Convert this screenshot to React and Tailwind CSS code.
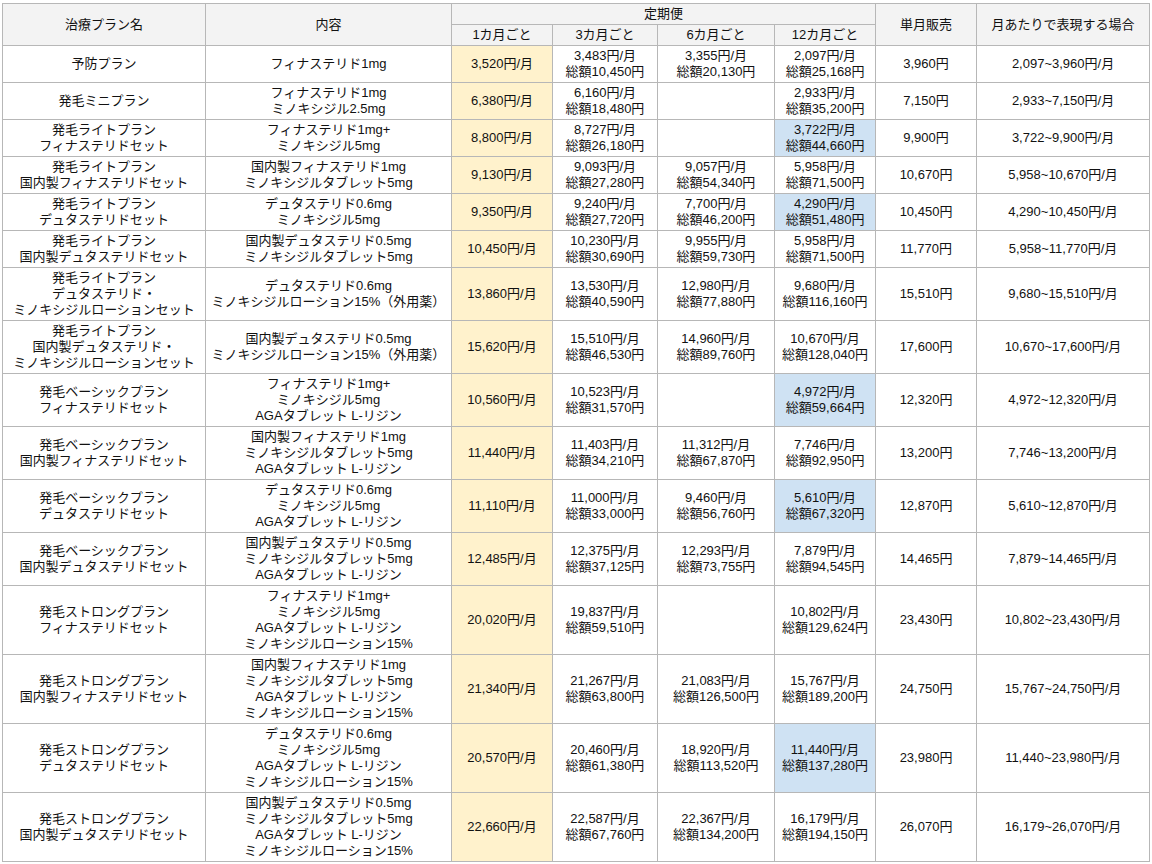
const rows = [
  ['予防プラン', 'フィナステリド1mg', '3,520円/月', ['3,483円/月', '総額10,450円'], ['3,355円/月', '総額20,130円'], ['2,097円/月', '総額25,168円'], false, '3,960円', '2,097~3,960円/月'],
  ['発毛ミニプラン', 'フィナステリド1mg\nミノキシジル2.5mg', '6,380円/月', ['6,160円/月', '総額18,480円'], null, ['2,933円/月', '総額35,200円'], false, '7,150円', '2,933~7,150円/月'],
  ['発毛ライトプラン\nフィナステリドセット', 'フィナステリド1mg+\nミノキシジル5mg', '8,800円/月', ['8,727円/月', '総額26,180円'], null, ['3,722円/月', '総額44,660円'], true, '9,900円', '3,722~9,900円/月'],
  ['発毛ライトプラン\n国内製フィナステリドセット', '国内製フィナステリド1mg\nミノキシジルタブレット5mg', '9,130円/月', ['9,093円/月', '総額27,280円'], ['9,057円/月', '総額54,340円'], ['5,958円/月', '総額71,500円'], false, '10,670円', '5,958~10,670円/月'],
  ['発毛ライトプラン\nデュタステリドセット', 'デュタステリド0.6mg\nミノキシジル5mg', '9,350円/月', ['9,240円/月', '総額27,720円'], ['7,700円/月', '総額46,200円'], ['4,290円/月', '総額51,480円'], true, '10,450円', '4,290~10,450円/月'],
  ['発毛ライトプラン\n国内製デュタステリドセット', '国内製デュタステリド0.5mg\nミノキシジルタブレット5mg', '10,450円/月', ['10,230円/月', '総額30,690円'], ['9,955円/月', '総額59,730円'], ['5,958円/月', '総額71,500円'], false, '11,770円', '5,958~11,770円/月'],
  ['発毛ライトプラン\nデュタステリド・\nミノキシジルローションセット', 'デュタステリド0.6mg\nミノキシジルローション15%（外用薬）', '13,860円/月', ['13,530円/月', '総額40,590円'], ['12,980円/月', '総額77,880円'], ['9,680円/月', '総額116,160円'], false, '15,510円', '9,680~15,510円/月'],
  ['発毛ライトプラン\n国内製デュタステリド・\nミノキシジルローションセット', '国内製デュタステリド0.5mg\nミノキシジルローション15%（外用薬）', '15,620円/月', ['15,510円/月', '総額46,530円'], ['14,960円/月', '総額89,760円'], ['10,670円/月', '総額128,040円'], false, '17,600円', '10,670~17,600円/月'],
  ['発毛ベーシックプラン\nフィナステリドセット', 'フィナステリド1mg+\nミノキシジル5mg\nAGAタブレット L-リジン', '10,560円/月', ['10,523円/月', '総額31,570円'], null, ['4,972円/月', '総額59,664円'], true, '12,320円', '4,972~12,320円/月'],
  ['発毛ベーシックプラン\n国内製フィナステリドセット', '国内製フィナステリド1mg\nミノキシジルタブレット5mg\nAGAタブレット L-リジン', '11,440円/月', ['11,403円/月', '総額34,210円'], ['11,312円/月', '総額67,870円'], ['7,746円/月', '総額92,950円'], false, '13,200円', '7,746~13,200円/月'],
  ['発毛ベーシックプラン\nデュタステリドセット', 'デュタステリド0.6mg\nミノキシジル5mg\nAGAタブレット L-リジン', '11,110円/月', ['11,000円/月', '総額33,000円'], ['9,460円/月', '総額56,760円'], ['5,610円/月', '総額67,320円'], true, '12,870円', '5,610~12,870円/月'],
  ['発毛ベーシックプラン\n国内製デュタステリドセット', '国内製デュタステリド0.5mg\nミノキシジルタブレット5mg\nAGAタブレット L-リジン', '12,485円/月', ['12,375円/月', '総額37,125円'], ['12,293円/月', '総額73,755円'], ['7,879円/月', '総額94,545円'], false, '14,465円', '7,879~14,465円/月'],
  ['発毛ストロングプラン\nフィナステリドセット', 'フィナステリド1mg+\nミノキシジル5mg\nAGAタブレット L-リジン\nミノキシジルローション15%', '20,020円/月', ['19,837円/月', '総額59,510円'], null, ['10,802円/月', '総額129,624円'], false, '23,430円', '10,802~23,430円/月'],
  ['発毛ストロングプラン\n国内製フィナステリドセット', '国内製フィナステリド1mg\nミノキシジルタブレット5mg\nAGAタブレット L-リジン\nミノキシジルローション15%', '21,340円/月', ['21,267円/月', '総額63,800円'], ['21,083円/月', '総額126,500円'], ['15,767円/月', '総額189,200円'], false, '24,750円', '15,767~24,750円/月'],
  ['発毛ストロングプラン\nデュタステリドセット', 'デュタステリド0.6mg\nミノキシジル5mg\nAGAタブレット L-リジン\nミノキシジルローション15%', '20,570円/月', ['20,460円/月', '総額61,380円'], ['18,920円/月', '総額113,520円'], ['11,440円/月', '総額137,280円'], true, '23,980円', '11,440~23,980円/月'],
  ['発毛ストロングプラン\n国内製デュタステリドセット', '国内製デュタステリド0.5mg\nミノキシジルタブレット5mg\nAGAタブレット L-リジン\nミノキシジルローション15%', '22,660円/月', ['22,587円/月', '総額67,760円'], ['22,367円/月', '総額134,200円'], ['16,179円/月', '総額194,150円'], false, '26,070円', '16,179~26,070円/月'],
];

const cell = 'border border-[#b7b7b7] px-1 py-[2px] text-center align-middle whitespace-pre-line';

function Lines({ v }) {
  if (!v) return null;
  return v.join('\n');
}

export default function App() {
  return (
    <div className="bg-white pt-[3px] pl-[2px] text-[13px] leading-[16px] text-[#111]" style={{ fontFamily: '"Liberation Sans", "Noto Sans CJK JP", sans-serif' }}>
      <table className="table-fixed border-collapse w-[1147px]">
        <colgroup>
          <col className="w-[203px]" />
          <col className="w-[246px]" />
          <col className="w-[101px]" />
          <col className="w-[105px]" />
          <col className="w-[117px]" />
          <col className="w-[101px]" />
          <col className="w-[101px]" />
          <col className="w-[173px]" />
        </colgroup>
        <thead>
          <tr className="h-[21px] bg-[#f3f3f3]">
            <th rowSpan={2} className={cell + ' font-normal'}>治療プラン名</th>
            <th rowSpan={2} className={cell + ' font-normal'}>内容</th>
            <th colSpan={4} className={cell + ' font-normal'}>定期便</th>
            <th rowSpan={2} className={cell + ' font-normal'}>単月販売</th>
            <th rowSpan={2} className={cell + ' font-normal'}>月あたりで表現する場合</th>
          </tr>
          <tr className="h-[21px] bg-[#f3f3f3]">
            <th className={cell + ' font-normal'}>1カ月ごと</th>
            <th className={cell + ' font-normal'}>3カ月ごと</th>
            <th className={cell + ' font-normal'}>6カ月ごと</th>
            <th className={cell + ' font-normal'}>12カ月ごと</th>
          </tr>
        </thead>
        <tbody>
          {rows.map((r, i) => (
            <tr key={i}>
              <td className={cell}>{r[0]}</td>
              <td className={cell}>{r[1]}</td>
              <td className={cell + ' bg-[#fff2cc]'}>{r[2]}</td>
              <td className={cell}><Lines v={r[3]} /></td>
              <td className={cell}><Lines v={r[4]} /></td>
              <td className={cell + (r[6] ? ' bg-[#cfe2f3]' : '')}><Lines v={r[5]} /></td>
              <td className={cell}>{r[7]}</td>
              <td className={cell}>{r[8]}</td>
            </tr>
          ))}
        </tbody>
      </table>
    </div>
  );
}
